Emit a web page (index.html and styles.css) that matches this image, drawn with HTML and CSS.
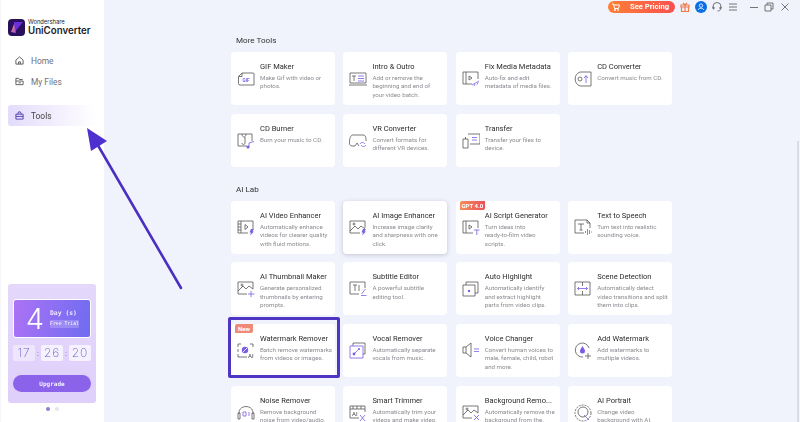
FILE: index.html
```html
<!DOCTYPE html>
<html lang="en">
<head>
  <meta charset="UTF-8">
  <title>UniConverter Tools</title>
  <link rel="stylesheet" href="styles.css">
</head>
<body>
  <aside class="sidebar">
    <div class="logo">
      <svg class="logo-mark" viewBox="0 0 17 17">
        <defs>
          <linearGradient id="logo-fill" x1="0" y1="0" x2="1" y2="1">
            <stop offset="0" stop-color="#f08a5a"/>
            <stop offset="1" stop-color="#9b4fe8"/>
          </linearGradient>
        </defs>
        <rect width="17" height="17" rx="4" fill="#2a0f5c"/>
        <path d="M6 3 L15 3 L6 14 Z" fill="#6a2fd8"/>
        <path d="M3 13 L6 5 L8 14 Z" fill="url(#logo-fill)"/>
      </svg>
      <div class="logo-text">
        <span class="logo-small">Wondershare</span>
        <span class="logo-big">UniConverter</span>
      </div>
    </div>

    <nav class="nav">
      <a class="nav-item">
        <svg class="nav-icon" viewBox="0 0 10 10"><path d="M1 4.5 L5 1 L9 4.5 V9 H1 Z M4 9 V6.5 H6 V9"/></svg>
        Home
      </a>
      <a class="nav-item">
        <svg class="nav-icon" viewBox="0 0 10 10"><path d="M1 8.5 V1.5 H4 L5 2.8 H8.5 M1 4.5 H9 V8.5 H1 M4 6.5 H6.5"/></svg>
        My Files
      </a>
      <a class="nav-item nav-item-active">
        <svg class="nav-icon nav-icon-active" viewBox="0 0 10 10"><path d="M1 3.5 H9 V9 H1 Z M3 3.5 L4 1 H6 L7 3.5 M1 6 H9"/></svg>
        Tools
      </a>
    </nav>

    <div class="promo">
      <div class="promo-day">
        <span class="promo-num">4</span>
        <div class="promo-label">
          <span class="promo-days">Day (s)</span>
          <span class="promo-trial">Free Trial</span>
        </div>
      </div>
      <div class="promo-timer">
        <span class="time-box time-box-first">17</span><span class="time-sep">:</span>
        <span class="time-box">26</span><span class="time-sep">:</span>
        <span class="time-box">20</span>
      </div>
      <button class="upgrade">Upgrade</button>
    </div>
    <div class="dots"><i class="dot dot-on"></i><i class="dot"></i></div>
  </aside>

  <div class="page">
    <header class="topbar">
      <span class="pricing">
        <svg class="cart" viewBox="0 0 8 8"><path d="M0 1 H1.5 L2.5 5.5 H6.5 L7.5 2 H2"/><circle cx="3" cy="7" r=".6"/><circle cx="6" cy="7" r=".6"/></svg>
        See Pricing
      </span>
      <svg class="top-icon top-gift" viewBox="0 0 10 10"><path d="M1 3 H9 V5 H1 Z M1.5 5 H8.5 V9.5 H1.5 Z M3 1 L5 3 L7 1 M5 3 V9.5" /></svg>
      <svg class="top-user" viewBox="0 0 12 12"><circle cx="6" cy="6" r="6" fill="#0b6fe4"/><circle cx="6" cy="4.6" r="1.7" fill="none" stroke="#fff" stroke-width=".8"/><path d="M3.2 9 C3.6 6.6 8.4 6.6 8.8 9" fill="none" stroke="#fff" stroke-width=".8"/></svg>
      <svg class="top-icon top-help" viewBox="0 0 10 10"><path d="M1 6 V4.5 A4 4 0 0 1 9 4.5 V6 M1 5 V7 H2 V5 Z M8 5 V7 H9 V5 Z M8.5 7 C8.5 8.5 7 9 5.5 9"/></svg>
      <svg class="top-icon" viewBox="0 0 10 10"><path d="M1 2 H9 M1 5 H9 M1 8 H9"/></svg>
      <svg class="top-icon top-min" viewBox="0 0 10 10"><path d="M1 5.5 H9"/></svg>
      <svg class="top-icon top-max" viewBox="0 0 10 10"><path d="M1 3 H7 V9 H1 Z M3 3 V1 H9 V7 H7"/></svg>
      <svg class="top-icon" viewBox="0 0 10 10"><path d="M1.5 1.5 L8.5 8.5 M8.5 1.5 L1.5 8.5"/></svg>
    </header>

    <main class="content">
      <h2 class="section-title">More Tools</h2>
      <section class="tools">
        <div class="tool">
          <svg class="tool-icon" viewBox="0 0 18 18"><path class="ln" d="M5 3 H16 Q17 3 17 4 V15 H3 Q1.5 15 1.5 13.5 V6.5 Z M5 3 V6.5 H1.5"/><text class="icon-gif" x="5.5" y="11.5">GIF</text></svg>
          <div><h3>GIF Maker</h3><p>Make Gif with video or<br>photos.</p></div>
        </div>
        <div class="tool">
          <svg class="tool-icon" viewBox="0 0 18 18"><path class="ln" d="M1 3 H17 V13 H1 Z M0 15 H18"/><path class="ln" d="M3 6 H7 M5 6 V11"/><path class="pl" d="M9 6 H15 M9 8.5 H15 M9 11 H15"/></svg>
          <div><h3>Intro &amp; Outro</h3><p>Add or remove the<br>beginning and end of<br>your video batch.</p></div>
        </div>
        <div class="tool">
          <svg class="tool-icon" viewBox="0 0 18 18"><path class="ln" d="M16 9 V2 H1 V14 H10 M4 2 V14"/><path class="ln" d="M7 6 L10 8 L7 10 Z"/><path class="pl" d="M10 15 L17 11 M12 16 L13 14 M15 14.5 L16 12.5"/></svg>
          <div><h3>Fix Media Metadata</h3><p>Auto-fix and edit<br>metadata of media files.</p></div>
        </div>
        <div class="tool">
          <svg class="tool-icon" viewBox="0 0 18 18"><path class="ln" d="M6 2 A7.5 7.5 0 0 0 6 16 H17 V2 Z"/><circle class="ln" cx="6" cy="9" r="2"/><path class="pl" d="M12 13 V6 M10 8 L12 5.5 L14 8"/></svg>
          <div><h3>CD Converter</h3><p>Convert music from CD.</p></div>
        </div>
        <div class="tool">
          <svg class="tool-icon" viewBox="0 0 18 18"><path class="ln" d="M1 2 H15 V9 M1 2 V14 H10 M5 2 C5 6 9 6 9 2 M8 5 V11 C8 13 5 13 5 11"/><path class="pl" d="M12 11 L17 9.5 M12 11 V15"/><circle class="ac" cx="11" cy="15" r="1.5"/></svg>
          <div><h3>CD Burner</h3><p>Burn your music to CD.</p></div>
        </div>
        <div class="tool">
          <svg class="tool-icon" viewBox="0 0 18 18"><path class="ln" d="M4 3 H14 C17 3 17 6 17 9 M10 14 L8 11 L6 14 H3 C1 14 0 12 0.5 9 C1 5 2 3 4 3"/><path class="pl" d="M11 12 C12 10 15 10 16 12 M17 13 C16 15 13 15 12 13"/></svg>
          <div><h3>VR Converter</h3><p>Convert formats for<br>different VR devices.</p></div>
        </div>
        <div class="tool">
          <svg class="tool-icon" viewBox="0 0 18 18"><path class="ln" d="M6 2 H18 V12 H8 M1 7 H6 V16 H1 Z M3.5 7 V5"/><path class="pl" d="M10 5.5 H15 M10 8 H15"/></svg>
          <div><h3>Transfer</h3><p>Transfer your files to<br>device.</p></div>
        </div>
      </section>

      <h2 class="section-title section-title-next">AI Lab</h2>
      <section class="tools">
        <div class="tool">
          <svg class="tool-icon" viewBox="0 0 18 18"><path class="ln" d="M1 2 H16 V10 M1 2 V14 H11 M4 2 V14 M1 5 H4 M1 8 H4 M1 11 H4"/><path class="ln" d="M8 5.5 L11 8 L8 10.5 Z"/><path class="ac" d="M14 10 H17 L15.5 12.5 H17 L13 16.5 L14 13.5 H12.5 Z"/></svg>
          <div><h3>AI Video Enhancer</h3><p>Automatically enhance<br>videos for clearer quality<br>with fluid motions.</p></div>
        </div>
        <div class="tool tool-raised">
          <svg class="tool-icon" viewBox="0 0 18 18"><path class="ln" d="M1 2 H16 V9 M1 2 V14 H11 M1 12 L6 7 L9 10 L12 7 L16 10"/><circle class="ln" cx="5" cy="5" r="1"/><path class="ac" d="M14 10 H17 L15.5 12.5 H17 L13 16.5 L14 13.5 H12.5 Z"/></svg>
          <div><h3>AI Image Enhancer</h3><p>Increase image clarity<br>and sharpness with one<br>click.</p></div>
        </div>
        <div class="tool">
          <span class="badge badge-gpt">GPT 4.0</span>
          <svg class="tool-icon" viewBox="0 0 18 18"><path class="ln" d="M16 9 V2 H1 V14 H11 M4 2 V14"/><path class="ln" d="M7 6 L10 8 L7 10 Z"/><path class="pl" d="M12 11 H17.5 M14.8 11 V16"/></svg>
          <div><h3>AI Script Generator</h3><p>Turn ideas into<br>ready-to-film video<br>scripts.</p></div>
        </div>
        <div class="tool">
          <svg class="tool-icon" viewBox="0 0 18 18"><path class="ln" d="M13 1 H1 V14 H10 M13 1 L16 4 V9 M13 1 V4 H16"/><path class="ln" d="M4 5 H10 M7 5 V11 M5.5 11 H8.5"/><path class="pl" d="M11.5 12 V14 M13.5 10 V16 M15.5 11 V15 M17.5 12.5 V13.5"/></svg>
          <div><h3>Text to Speech</h3><p>Turn text into realistic<br>sounding voice.</p></div>
        </div>
        <div class="tool">
          <svg class="tool-icon" viewBox="0 0 18 18"><path class="ln" d="M1 2 H16 V9 M1 2 V14 H10 M1 11 L6 6 L9 9 L12 6 L16 9"/><circle class="ln" cx="5" cy="5" r="1"/><path class="pl" d="M14 11 V17 M11 14 H17.5"/></svg>
          <div><h3>AI Thumbnail Maker</h3><p>Generate personalized<br>thumbnails by entering<br>prompts.</p></div>
        </div>
        <div class="tool">
          <svg class="tool-icon" viewBox="0 0 18 18"><path class="ln" d="M1 2 H16 V8 M1 2 V14 H10"/><path class="ln" d="M4 5 H8 M6 5 V11 M10 5 V11"/><path class="pl" d="M16.5 9 L12.5 14 M12 15.5 H17.5"/></svg>
          <div><h3>Subtitle Editor</h3><p>A powerful subtitle<br>editing tool.</p></div>
        </div>
        <div class="tool">
          <svg class="tool-icon" viewBox="0 0 18 18"><path class="ln" d="M1 5 H13 V16 H1 Z M4 5 V2 H16 V13 H13"/><circle class="ac" cx="7" cy="11" r="1.2"/></svg>
          <div><h3>Auto Highlight</h3><p>Automatically identify<br>and extract highlight<br>parts from video clips.</p></div>
        </div>
        <div class="tool">
          <svg class="tool-icon" viewBox="0 0 18 18"><path class="ln" d="M1 2 H16 V15 H1 Z M8.5 2 V6 M8.5 11 V15"/><path class="pl" d="M3.5 8.5 H13.5 M5 7 L3.5 8.5 L5 10 M12 7 L13.5 8.5 L12 10"/></svg>
          <div><h3>Scene Detection</h3><p>Automatically detect<br>video transitions and split<br>them into clips.</p></div>
        </div>
        <div class="tool tool-marked">
          <span class="badge badge-new">New</span>
          <svg class="tool-icon" viewBox="0 0 18 18"><path class="ln" d="M1 5 V2 H4 M13 2 H16 V5 M1 12 V15 H10 M1 7 V10"/><circle class="ac" cx="8" cy="8" r="3.2"/><path class="wm" d="M6 10 L10 6"/><text class="icon-ai" x="11" y="16">AI</text></svg>
          <div><h3>Watermark Remover</h3><p>Batch remove watermarks<br>from videos or images.</p></div>
        </div>
        <div class="tool">
          <svg class="tool-icon" viewBox="0 0 18 18"><path class="ln" d="M4 4 V1 H16 V12 H14"/><path class="pl" d="M1 4 H14 V16 H1 Z"/><path class="pl" d="M5 12 L10 7"/><circle class="ac" cx="5" cy="12" r="1.4"/><circle class="ac" cx="10" cy="7" r="1"/></svg>
          <div><h3>Vocal Remover</h3><p>Automatically separate<br>vocals from music.</p></div>
        </div>
        <div class="tool">
          <svg class="tool-icon" viewBox="0 0 18 18"><path class="ln" d="M1 5 H4 L9 1 V15 L4 11 H1 Z M4 5 V11"/><path class="pl" d="M12 7 H17 M12 9.5 H17"/></svg>
          <div><h3>Voice Changer</h3><p>Convert human voices to<br>male, female, child, robot<br>and more.</p></div>
        </div>
        <div class="tool">
          <svg class="tool-icon" viewBox="0 0 18 18"><path class="ln" d="M15 6 A7 7 0 1 0 9 15"/><path class="ac" d="M8.5 4 C10 6.5 11 7.5 11 9 A2.5 2.5 0 0 1 6 9 C6 7.5 7 6.5 8.5 4 Z"/><path class="ln" d="M14 11 V17 M11 14 H17"/></svg>
          <div><h3>Add Watermark</h3><p>Add watermarks to<br>multiple videos.</p></div>
        </div>
        <div class="tool">
          <svg class="tool-icon" viewBox="0 0 18 18"><path class="ln" d="M2 10 C1 0 17 0 16 10 M1 9 H3 V15 H1 Z M15 9 H17 V15 H15 Z"/><path class="pl" d="M6 8 H9 V12 H6 Z M11 9 H13 M11 11 H13"/></svg>
          <div><h3>Noise Remover</h3><p>Remove background<br>noise from video/audio.</p></div>
        </div>
        <div class="tool">
          <svg class="tool-icon" viewBox="0 0 18 18"><path class="ln" d="M1 2 H16 V5 H1 Z M1 5 V14 H10 M16 5 V8 M4 2 V5 M8 2 V5 M12 2 V5"/><text class="icon-ai" x="3" y="12">AI</text><path class="pl" d="M11 11 L16 17 M16 11 L11 17"/></svg>
          <div><h3>Smart Trimmer</h3><p>Automatically trim your<br>videos and make video.</p></div>
        </div>
        <div class="tool">
          <svg class="tool-icon" viewBox="0 0 18 18"><path class="ln" d="M1 2 H16 V9 M1 2 V14 H10 M1 11 L6 6 L9 9 L12 6 L16 9"/><circle class="ln" cx="5" cy="5" r="1"/><path class="pl" d="M12 11 L17 16 M17 11 L12 16"/></svg>
          <div><h3>Background Remo...</h3><p>Automatically remove the<br>background from the.</p></div>
        </div>
        <div class="tool">
          <svg class="tool-icon" viewBox="0 0 18 18"><circle class="ln ln-dash" cx="9" cy="9" r="8"/><circle class="ln" cx="9" cy="8" r="5"/><path class="pl" d="M10 11 L15 16"/></svg>
          <div><h3>AI Portrait</h3><p>Change video<br>background with AI.</p></div>
        </div>
      </section>
    </main>
  </div>

  <i class="scrollbar"></i>

  <svg class="arrow" viewBox="0 0 800 422">
    <path d="M181 288 L96 142" fill="none" stroke="#4b2fc0" stroke-width="2.6" stroke-linecap="round"/>
    <path d="M87 128 L107 141 L91 151 Z" fill="#4e2fd0"/>
  </svg>
</body>
</html>
```

FILE: styles.css
```css
* {
  box-sizing: border-box;
}

body {
  margin: 0;
  height: 422px;
  overflow: hidden;
  display: flex;
  background-color: #f0f3fc;
  font-family: Roboto, "Noto Sans", sans-serif;
  color: #333;
  filter: blur(0.35px);
}

/* sidebar */
.sidebar {
  width: 104px;
  flex: none;
  background-color: #fff;
  border-left: 1px solid #f4f4fa;
  padding: 19px 8px 0 7px;
  display: flex;
  flex-direction: column;
}

.logo {
  display: flex;
  align-items: center;
  gap: 3px;
  height: 17px;
}

.logo-mark {
  width: 17px;
  height: 17px;
  flex: none;
}

.logo-text {
  display: flex;
  flex-direction: column;
  font-family: "Inter", sans-serif;
  color: #1c1c28;
}

.logo-small {
  font-size: 5.8px;
  line-height: 6px;
}

.logo-big {
  font-size: 9.7px;
  line-height: 11px;
  font-weight: 600;
}

.nav {
  margin-top: 14px;
  display: flex;
  flex-direction: column;
}

.nav-item {
  display: flex;
  align-items: center;
  gap: 7px;
  height: 21px;
  padding-left: 7px;
  font-size: 8.4px;
  color: #707078;
}

.nav-item-active {
  margin-top: 13px;
  margin-right: -1px;
  color: #444;
  border-radius: 3px;
  background: linear-gradient(90deg, #e3dcfb, #f3effd 55%, #fff);
}

.nav-icon {
  width: 9px;
  height: 9px;
  fill: none;
  stroke: #555;
  stroke-width: 1;
}

.nav-icon-active {
  stroke: #4e3aa8;
}

/* trial card */
.promo {
  margin-top: auto;
  height: 119px;
  padding: 15px 5px 0;
  border-radius: 3px;
  background: linear-gradient(180deg, #e4d8fb, #dfcffb);
}

.promo-day {
  display: flex;
  align-items: center;
  height: 39px;
  border: 1.5px solid #fff;
  border-radius: 3px;
  background: linear-gradient(100deg, #ac72f5, #6f6cf0);
  color: #fff;
}

.promo-num {
  width: 30px;
  text-align: right;
  font-family: "Inter", sans-serif;
  font-weight: 300;
  font-size: 29px;
  line-height: 36px;
}

.promo-label {
  margin-left: 6px;
  display: flex;
  flex-direction: column;
  gap: 2px;
  font-family: "DejaVu Sans Mono", monospace;
}

.promo-days {
  font-size: 6.4px;
  line-height: 9px;
  font-weight: bold;
  color: #eee8ff;
}

.promo-trial {
  width: 29px;
  text-align: center;
  white-space: nowrap;
  font-size: 4.8px;
  line-height: 8px;
  border-radius: 1px;
  background-color: rgba(255, 255, 255, 0.2);
}

.promo-timer {
  display: flex;
  align-items: center;
  margin-top: 7px;
  height: 16px;
  color: #6a5fc8;
}

.time-box {
  width: 22px;
  height: 16px;
  border-radius: 2px;
  background-color: #f6f1fe;
  text-align: center;
  font-family: "Inter", sans-serif;
  font-weight: 200;
  font-size: 12px;
  line-height: 16px;
  letter-spacing: 0.8px;
}

.time-box-first {
  background-color: #eee6fc;
}

.time-sep {
  width: 6px;
  text-align: center;
  font-size: 8px;
}

.upgrade {
  display: block;
  width: 100%;
  height: 17px;
  margin-top: 14px;
  padding: 0;
  border: none;
  border-radius: 9px;
  background-color: #8a63ea;
  color: #f4efff;
  font-family: "DejaVu Sans Mono", monospace;
  font-size: 6px;
  font-weight: bold;
}

.dots {
  display: flex;
  justify-content: center;
  gap: 5px;
  height: 19px;
  padding-top: 4px;
}

.dot {
  width: 4px;
  height: 4px;
  border-radius: 50%;
  background-color: #e6e4ee;
}

.dot-on {
  background-color: #8b7fd0;
}

/* right side */
.page {
  flex: 1;
  min-width: 0;
}

.topbar {
  display: flex;
  justify-content: flex-end;
  align-items: center;
  height: 13px;
  padding-right: 10px;
}

.pricing {
  display: flex;
  align-items: center;
  gap: 10px;
  width: 67px;
  height: 12px;
  padding-left: 4px;
  border-radius: 6px;
  background: linear-gradient(90deg, #ff8035, #f8504f);
  color: #fff;
  font-size: 7.6px;
  font-weight: 700;
}

.cart {
  width: 8px;
  height: 8px;
  flex: none;
  fill: none;
  stroke: #fff;
}

.top-icon {
  width: 10px;
  height: 10px;
  margin-left: 6px;
  fill: none;
  stroke: #666;
  stroke-width: 0.9;
}

.top-gift {
  margin-left: 5px;
  stroke: #ee7a4a;
  stroke-width: 1.2;
}

.top-user {
  width: 12px;
  height: 12px;
  margin-left: 5px;
}

.top-help {
  margin-left: 5px;
}

.top-min {
  margin-left: 11px;
}

.top-max {
  margin-left: 5px;
}

.content {
  padding: 21px 0 0 127px;
  width: 568px;
}

.section-title {
  margin: 0 0 6px 5px;
  font-size: 8.1px;
  line-height: 12px;
  font-weight: 400;
  color: #333;
}

.section-title-next {
  margin-top: 16px;
}

.tools {
  display: grid;
  grid-template-columns: repeat(4, 104px);
  grid-auto-rows: 53px;
  column-gap: 8.4px;
  row-gap: 8.7px;
}

.tool {
  position: relative;
  display: flex;
  gap: 5px;
  padding: 9px 1px 0 6px;
  border-radius: 4px;
  background-color: #fff;
}

.tool-raised {
  box-shadow: 0 1px 4px rgba(60, 60, 90, 0.25);
}

/* the purple frame drawn around the Watermark card */
.tool-marked::after {
  content: "";
  position: absolute;
  inset: -7px -5px -1px -3px;
  border: 3px solid #4f35c4;
  border-radius: 2px;
}

.tool-icon {
  width: 18px;
  height: 18px;
  flex: none;
  margin-top: 9px;
}

.ln, .pl, .wm {
  fill: none;
  stroke-width: 0.8;
}

.ln {
  stroke: #555;
}

.ln-dash {
  stroke-dasharray: 2 1;
}

.pl {
  stroke: #7c5ce6;
}

.wm {
  stroke: #fff;
}

.ac {
  fill: #7c5ce6;
}

.icon-ai {
  font-size: 6px;
  fill: #444;
}

.icon-gif {
  font-size: 4.6px;
  font-weight: 700;
  fill: #7c5ce6;
}

.tool h3 {
  margin: 0;
  font-size: 7.5px;
  line-height: 11px;
  font-weight: 400;
  white-space: nowrap;
  color: #2c2c2c;
}

.tool p {
  margin: 2px 0 0;
  font-size: 6.2px;
  line-height: 8.4px;
  white-space: nowrap;
  color: #8b8b92;
}

.badge {
  position: absolute;
  top: 0;
  height: 9px;
  border-radius: 2px 0 2px 0;
  color: #fff;
  font-size: 6px;
  line-height: 9px;
  font-weight: 700;
  text-align: center;
}

.badge-gpt {
  left: 4px;
  width: 25px;
  background: linear-gradient(90deg, #f0905a, #ee4f58);
}

.badge-new {
  left: 4px;
  width: 18px;
  background-color: #f08a78;
}

.scrollbar {
  position: absolute;
  top: 141px;
  right: 1px;
  bottom: 0;
  width: 2px;
  background-color: #d8dbe8;
}

.arrow {
  position: absolute;
  top: 0;
  left: 0;
  width: 800px;
  height: 422px;
  pointer-events: none;
}
```
